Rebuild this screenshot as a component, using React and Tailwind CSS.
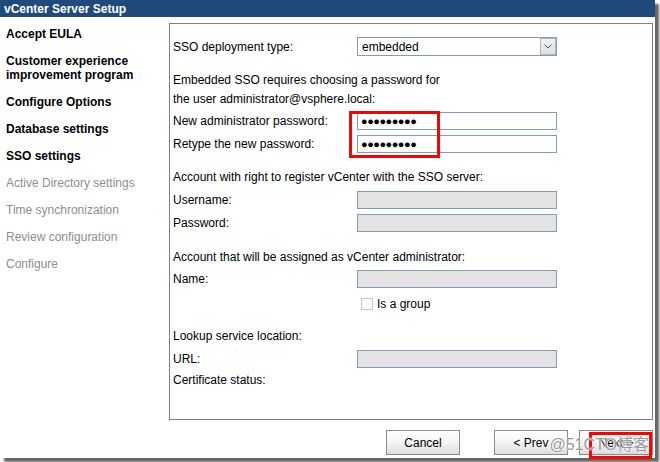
import React from "react";

const font = "font-['Liberation_Sans',Arial,sans-serif]";

const steps = [
  { label: ["Accept EULA"], done: true },
  { label: ["Customer experience", "improvement program"], done: true },
  { label: ["Configure Options"], done: true },
  { label: ["Database settings"], done: true },
  { label: ["SSO settings"], done: true },
  { label: ["Active Directory settings"] },
  { label: ["Time synchronization"] },
  { label: ["Review configuration"] },
  { label: ["Configure"] },
];

function Field({ className = "", label, children }) {
  return (
    <div className={`flex h-[18px] items-center ${className}`}>
      <span className="w-[184px]">{label}</span>
      {children}
    </div>
  );
}

function TextBox({ value, disabled }) {
  return (
    <div
      className={`flex h-[18px] w-[200px] items-center border border-[#7f9db9] pl-[3px] ${
        disabled ? "bg-[#e3e3e3]" : "bg-white"
      }`}
    >
      {value && (
        <span className="text-[11px] font-bold leading-none tracking-[-0.5px]">{value}</span>
      )}
    </div>
  );
}

function Button({ children, className = "" }) {
  return (
    <button
      type="button"
      className={`relative h-[25px] w-[74px] border border-[#8c8c8c] bg-gradient-to-b from-white via-[#f4f4f4] to-[#dcdcdc] text-[12px] text-black ${className}`}
    >
      {children}
    </button>
  );
}

export default function App() {
  const dots = "\u25CF".repeat(9);
  return (
    <div className={`h-[462px] w-[660px] bg-white ${font} text-[12px] text-black`}>
      <div className="flex h-[458px] w-[655px] flex-col bg-white shadow-[4px_4px_2px_rgba(0,0,0,0.6)]">
        <div className="flex h-[17px] items-center bg-[#1f4a7b] pl-[4px] text-[12px] font-bold text-white">
          vCenter Server Setup
        </div>
        <div className="flex flex-1">
          <nav className="flex w-[169px] flex-col gap-[13px] pl-[6px] pt-[10px]">
            {steps.map((s, i) => (
              <div
                key={i}
                className={`leading-[14px] ${s.done ? "font-bold text-black" : "text-[#8e8e8e]"}`}
              >
                {s.label.map((l) => (
                  <div key={l}>{l}</div>
                ))}
              </div>
            ))}
          </nav>
          <div className="flex w-[486px] flex-col">
            <div className="relative mt-[6px] h-[397px] w-[484px] border border-[#808080] pl-[3px]">
              <Field className="mt-[13px] h-[19px]" label="SSO deployment type:">
                <div className="flex h-[19px] w-[200px] items-center justify-between border border-[#7f9db9] bg-white pl-[4px]">
                  <span>embedded</span>
                  <div className="flex h-[17px] w-[16px] items-center justify-center border border-[#b5b5b5] bg-gradient-to-b from-[#f2f2f2] to-[#dedede]">
                    <svg width="8" height="5" viewBox="0 0 8 5">
                      <path d="M0.5 0.5 L4 4 L7.5 0.5" fill="none" stroke="#555" strokeWidth="1" />
                    </svg>
                  </div>
                </div>
              </Field>
              <div className="mt-[15px] leading-[19px]">
                <div>Embedded SSO requires choosing a password for</div>
                <div>the user administrator@vsphere.local:</div>
              </div>
              <Field className="mt-[3px]" label="New administrator password:">
                <TextBox value={dots} />
              </Field>
              <Field className="mt-[5px]" label="Retype the new password:">
                <TextBox value={dots} />
              </Field>
              <div className="absolute left-[179px] top-[87px] h-[47px] w-[91px] border-[3px] border-[#ff0000]" />

              <div className="mt-[15px] leading-[18px]">
                Account with right to register vCenter with the SSO server:
              </div>
              <Field className="mt-[5px]" label="Username:">
                <TextBox disabled />
              </Field>
              <Field className="mt-[5px]" label="Password:">
                <TextBox disabled />
              </Field>

              <div className="mt-[16px] leading-[18px]">
                Account that will be assigned as vCenter administrator:
              </div>
              <Field className="mt-[4px]" label="Name:">
                <TextBox disabled />
              </Field>
              <div className="mt-[8px] flex h-[16px] items-center pl-[188px]">
                <div className="h-[12px] w-[12px] border border-[#c8c8c8] bg-white" />
                <span className="ml-[4px]">Is a group</span>
              </div>

              <div className="mt-[15px] leading-[18px]">Lookup service location:</div>
              <Field className="mt-[5px]" label="URL:">
                <TextBox disabled />
              </Field>
              <div className="mt-[3px] leading-[18px]">Certificate status:</div>
            </div>

            <div className="relative mt-[10px] flex justify-end pr-[2px]">
              <Button>Cancel</Button>
              <Button className="ml-[34px]">&lt; Prev</Button>
              <Button className="ml-[11px]">
                Next &gt;
                <span className="absolute left-[9px] top-[1px] h-[27px] w-[63px] border-[3px] border-[#ff0000]" />
              </Button>
              <span className="pointer-events-none absolute right-[6px] top-[3px] font-['Liberation_Sans','Noto_Sans_CJK_SC',sans-serif] text-[16px] text-[#9a9a9a] [text-shadow:0_0_2px_#fff,0_0_1px_#fff]">
                @51CTO博客
              </span>
            </div>
          </div>
        </div>
      </div>
    </div>
  );
}
